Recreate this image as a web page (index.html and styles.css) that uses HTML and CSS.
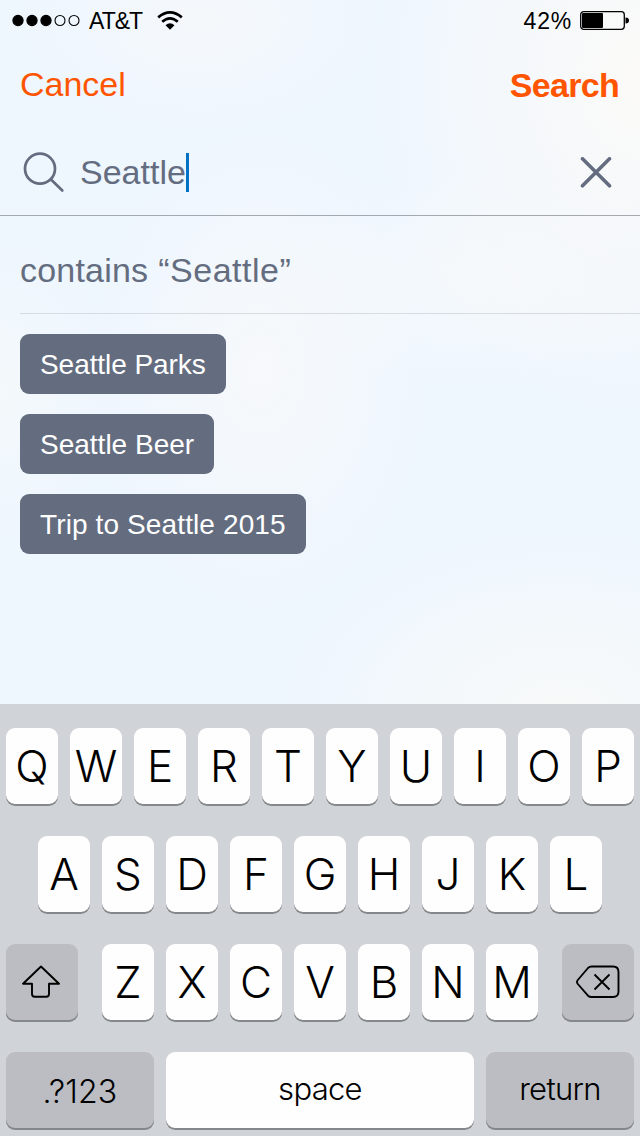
FILE: index.html
```html
<!DOCTYPE html>
<html lang="en">
<head>
<meta charset="utf-8">
<title>Search</title>
<link rel="stylesheet" href="styles.css">
</head>
<body>
<main class="screen">
  <header class="status">
    <svg class="signal" width="70" height="14" viewBox="0 0 70 14"><g stroke="#000" stroke-width="1.1"><circle cx="6" cy="6.5" r="5.1"/><circle cx="20" cy="6.5" r="5.1"/><circle cx="34" cy="6.5" r="5.1"/><circle cx="48" cy="6.5" r="5" fill="none"/><circle cx="62" cy="6.5" r="5" fill="none"/></g></svg>
    <span class="carrier">AT&amp;T</span>
    <svg class="wifi" width="26" height="20" viewBox="0 0 26 20"><g fill="none" stroke="#000" stroke-width="2.7"><path d="M1.2 6.4Q13-3.6 24.8 6.4"/><path d="M5.2 10.8Q13 4 20.8 10.8"/></g><path d="M8.5 14.2Q13 10.2 17.5 14.2L13 18.8Z"/></svg>
    <span class="percent">42%</span>
    <svg class="battery" width="49" height="20" viewBox="0 0 49 20"><rect x=".7" y=".7" width="43.6" height="17.6" rx="3" fill="none" stroke="#000" stroke-width="1.3"/><rect x="2" y="2" width="21" height="15" rx="1"/><path d="M45.5 6.5q3.5 0 3.5 3t-3.5 3z"/></svg>
  </header>
  <nav class="nav"><span class="cancel">Cancel</span><span class="search">Search</span></nav>
  <section class="field">
    <svg class="glass" width="42" height="42" viewBox="0 0 42 42" fill="none" stroke="#646d7f" stroke-width="2.7" stroke-linecap="round"><circle cx="17" cy="16.7" r="15"/><path d="M28 27.5L39.3 38.5"/></svg>
    <span class="query">Seattle</span><span class="caret"></span>
    <svg class="clear" width="32" height="32" viewBox="0 0 32 32" fill="none" stroke="#646d7f" stroke-width="3.6" stroke-linecap="round"><path d="M2.5 1.8l27 27M29.5 1.8l-27 27"/></svg>
  </section>
  <section class="results">
    <h1 class="heading">contains <span class="quoted">“Seattle”</span></h1>
    <div class="chips">
      <span class="chip chip-parks">Seattle Parks</span>
      <span class="chip">Seattle Beer</span>
      <span class="chip chip-trip">Trip to Seattle 2015</span>
    </div>
  </section>
  <section class="keyboard">
    <div class="row">
      <span class="key">Q</span><span class="key">W</span><span class="key">E</span><span class="key">R</span><span class="key">T</span><span class="key">Y</span><span class="key">U</span><span class="key">I</span><span class="key">O</span><span class="key">P</span>
    </div>
    <div class="row">
      <span class="key">A</span><span class="key">S</span><span class="key">D</span><span class="key">F</span><span class="key">G</span><span class="key">H</span><span class="key">J</span><span class="key">K</span><span class="key">L</span>
    </div>
    <div class="row">
      <span class="key dark shift"><svg width="40" height="34" viewBox="0 0 40 34" fill="none" stroke="#000" stroke-width="1.9" stroke-linejoin="round"><path d="M19 1.5L1 18.7H10V29Q10 31.7 12.7 31.7H24.3Q27 31.7 27 29V18.7H37Z"/></svg></span>
      <span class="key">Z</span><span class="key">X</span><span class="key">C</span><span class="key">V</span><span class="key">B</span><span class="key">N</span><span class="key">M</span>
      <span class="key dark delete"><svg width="44" height="34" viewBox="0 0 44 34" fill="none" stroke="#000" stroke-width="1.9" stroke-linejoin="round"><path d="M15.5 1.5H37Q42.5 1.5 42.5 7V26.5Q42.5 32 37 32H15.5Q13.5 32 12 30.7L1.8 19Q.2 17 1.8 15L12 3Q13.5 1.5 15.5 1.5ZM18.5 9.5L33.5 24.5M33.5 9.5L18.5 24.5"/></svg></span>
    </div>
    <div class="row">
      <span class="key dark wide numbers">.?123</span>
      <span class="key space">space</span>
      <span class="key dark wide return">return</span>
    </div>
  </section>
</main>
</body>
</html>
```
FILE: styles.css
```css
* { box-sizing: border-box; }
body { margin: 0; }
.screen {
  display: flex;
  flex-direction: column;
  width: 640px;
  height: 1136px;
  overflow: hidden;
  font-family: "Liberation Sans", Arial, sans-serif;
  color: #646d7f;
  background:
    radial-gradient(ellipse 270px 340px at 640px 80px, #fbfaf8, #fbfaf800),
    radial-gradient(ellipse 280px 180px at 560px 710px, #f8faf9, #f8faf900),
    radial-gradient(ellipse 170px 240px at 260px 370px, #f7f9fb, #f7f9fb00),
    radial-gradient(ellipse 120px 150px at 0 390px, #f4f9fb, #f4f9fb00),
    radial-gradient(ellipse 180px 110px at 200px 20px, #f5f8fb, #f5f8fb00),
    radial-gradient(ellipse 220px 110px at 480px 280px, #f5f9fc, #f5f9fc00),
    #eef6fe;
}
.status {
  display: flex;
  align-items: center;
  height: 41px;
  padding: 0 11px 0 12px;
  color: #000;
  font-size: 23px;
}
.carrier { width: 60px; margin-left: 7px; letter-spacing: -1px; padding-top: 1px; }
.wifi { margin-left: 8px; }
.percent { margin-left: auto; margin-right: 8px; letter-spacing: .8px; padding-top: 1px; }
.nav {
  display: flex;
  justify-content: space-between;
  align-items: center;
  height: 87px;
  padding: 0 21px 0 20px;
  color: #ff5500;
  font-size: 34px;
}
.search { font-weight: 700; letter-spacing: -.7px; padding-top: 2px; }
.field {
  display: flex;
  align-items: center;
  height: 88px;
  padding: 2px 28px 0 23px;
  border-bottom: 1px solid #a4a9ad;
  font-size: 34px;
}
.query { margin-left: 15px; }
.caret { width: 3px; height: 39px; background: #0072c6; }
.clear { margin-left: auto; }
.results { display: flex; flex-direction: column; height: 488px; padding-left: 20px; }
.heading {
  display: flex;
  gap: 10px;
  align-items: center;
  height: 98px;
  margin: 0;
  padding-top: 11px;
  border-bottom: 1px solid #d6dce2;
  font-size: 34px;
  font-weight: 400;
  letter-spacing: .2px;
}
.quoted { letter-spacing: .5px; }
.chips { display: flex; flex-direction: column; align-items: flex-start; gap: 20px; padding-top: 20px; }
.chip {
  height: 60px;
  padding: 0 20px;
  border-radius: 9px;
  background: #646d7f;
  color: #fff;
  font-size: 28px;
  line-height: 62px;
  white-space: nowrap;
}
.chip-parks { letter-spacing: -.06px; }
.chip-trip { letter-spacing: .12px; }
.keyboard {
  display: flex;
  flex-direction: column;
  gap: 30px;
  height: 432px;
  padding-top: 24px;
  background: #d0d3d7;
}
.row { display: flex; justify-content: center; gap: 12px; }
.key {
  display: flex;
  align-items: center;
  justify-content: center;
  width: 52px;
  height: 78px;
  padding-bottom: 2px;
  border-radius: 9px;
  background: #fefefe;
  box-shadow: inset 0 -2px #85888b;
  color: #000;
  font-family: Inter, "Liberation Sans", sans-serif;
  font-size: 44px;
  font-weight: 300;
}
.dark { background: #bbbdc2; }
.shift { width: 72px; margin-right: 12px; }
.delete { width: 72px; margin-left: 12px; }
.wide { width: 148px; font-size: 31px; }
.numbers { padding-bottom: 0; font-size: 32px; letter-spacing: .2px; }
.space { width: 308px; font-size: 31px; padding-bottom: 5px; letter-spacing: -.7px; }
.return { padding-bottom: 5px; letter-spacing: -.7px; }
```
